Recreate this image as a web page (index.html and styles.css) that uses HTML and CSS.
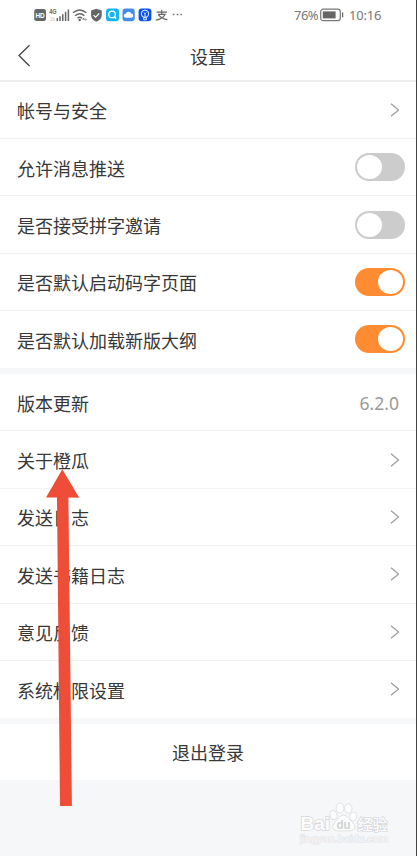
FILE: index.html
```html
<!DOCTYPE html>
<html lang="zh-CN">
<head>
<meta charset="utf-8">
<title>设置</title>
<link rel="stylesheet" href="styles.css">
</head>
<body>
<div class="screen">
  <div class="status">
    <svg class="status-icons" width="152" height="20" viewBox="0 0 152 20">
      <rect x="1.2" y="4" width="11.8" height="12" rx="2.5" fill="#666"/>
      <text x="2.4" y="12.8" font-size="7.5" font-weight="700" fill="#fff" textLength="9.4" lengthAdjust="spacingAndGlyphs">HD</text>
      <text x="16.2" y="9" font-size="7" font-weight="700" fill="#666" textLength="7.4" lengthAdjust="spacingAndGlyphs">4G</text>
      <text x="17" y="15.5" font-size="5" fill="#bbb" textLength="5" lengthAdjust="spacingAndGlyphs">1b</text>
      <path d="M24.3 16v-3M27 16v-4.8M29.8 16v-6.8M32.6 16V6.8M35.4 16V4.5" stroke="#666" stroke-width="1.5"/>
      <g fill="none" stroke="#666" stroke-width="1.5">
        <path d="M40 7.8q6.7-5.7 13.4 0M42.2 10.8q4.6-4 9.2 0M44.5 13.2q2.3-2 4.6 0"/>
      </g>
      <circle cx="46.7" cy="15" r="1.2" fill="#666"/>
      <path d="M49.5 14.2h4M49.8 14.2l1.4-1.5M53.4 14.2l-1.4 1.5" stroke="#666" stroke-width=".8" fill="none"/>
      <path d="M63.3 3.8l5.4 1.8v4.6q0 4.2-5.4 6.5q-5.2-2.3-5.2-6.5V5.6z" fill="#666"/>
      <path d="M60.5 10.1l2.1 2 3.7-3.8" fill="none" stroke="#fff" stroke-width="1.2"/>
      <rect x="73" y="3.5" width="13" height="12.8" rx="3" fill="#12b4f5"/>
      <circle cx="79.1" cy="9.4" r="3.3" fill="none" stroke="#fff" stroke-width="1.3"/>
      <path d="M81.3 11.8l1.9 1.9" stroke="#fff" stroke-width="1.3"/>
      <rect x="89.5" y="3.5" width="12.2" height="12.8" rx="3" fill="#438cec"/>
      <path d="M92.8 12.8a2 2 0 0 1 0-4a2.9 2.9 0 0 1 5.4-.4a2.3 2.3 0 0 1 .6 4.4z" fill="#fff"/>
      <rect x="105.6" y="3.5" width="12.8" height="12.8" rx="3" fill="#0a55e8"/>
      <circle cx="112" cy="8.8" r="3.6" fill="none" stroke="#d8e6ff" stroke-width="1.1"/>
      <path d="M112 8.5v5M110.6 12.5v2.3h2.8v-2.3M110.8 7.5l1.2 1.2 1.2-1.2" fill="none" stroke="#d8e6ff" stroke-width="1"/>
      <path d="M123.6 7.2h10.4M128.8 4.8v4.5M125 9.4h7q-2.2 4.4-9.2 5.7M125.6 9.8q3.2 4 8.8 4.8" fill="none" stroke="#666" stroke-width="1.2"/>
      <path d="M139.8 9.5h1.7M143.7 9.5h1.7M147.5 9.5h1.5" stroke="#777" stroke-width="1.5"/>
    </svg>
    <div class="status-right">
      <span class="percent">76%</span>
      <svg class="battery" width="24" height="14" viewBox="0 0 24 14">
        <rect x=".7" y="1.2" width="19.6" height="11.4" rx="2.6" fill="none" stroke="#777" stroke-width="1.2"/>
        <rect x="2.8" y="3.4" width="12.8" height="7" fill="#666"/>
        <path d="M22.6 4.5v4.8" stroke="#666" stroke-width="1.3"/>
      </svg>
      <span class="clock">10:16</span>
    </div>
  </div>
  <header class="header">
    <svg class="back" width="14" height="24" viewBox="0 0 14 24"><path d="M12.5 1.3L2 11.5 12.5 22" fill="none" stroke="#444" stroke-width="1.3"/></svg>
    <h1 class="title">设置</h1>
  </header>

  <section class="group">
    <div class="row"><span class="label">帐号与安全</span><svg class="chevron" viewBox="0 0 10 14"><path d="M1 .8l7.6 6.2L1 13.2"/></svg></div>
    <div class="row"><span class="label">允许消息推送</span><i class="switch"></i></div>
    <div class="row"><span class="label">是否接受拼字邀请</span><i class="switch"></i></div>
    <div class="row"><span class="label">是否默认启动码字页面</span><i class="switch on"></i></div>
    <div class="row"><span class="label">是否默认加载新版大纲</span><i class="switch on"></i></div>
  </section>

  <section class="group">
    <div class="row"><span class="label">版本更新</span><span class="version">6.2.0</span></div>
    <div class="row"><span class="label">关于橙瓜</span><svg class="chevron" viewBox="0 0 10 14"><path d="M1 .8l7.6 6.2L1 13.2"/></svg></div>
    <div class="row"><span class="label">发送日志</span><svg class="chevron" viewBox="0 0 10 14"><path d="M1 .8l7.6 6.2L1 13.2"/></svg></div>
    <div class="row"><span class="label">发送书籍日志</span><svg class="chevron" viewBox="0 0 10 14"><path d="M1 .8l7.6 6.2L1 13.2"/></svg></div>
    <div class="row"><span class="label">意见反馈</span><svg class="chevron" viewBox="0 0 10 14"><path d="M1 .8l7.6 6.2L1 13.2"/></svg></div>
    <div class="row"><span class="label">系统权限设置</span><svg class="chevron" viewBox="0 0 10 14"><path d="M1 .8l7.6 6.2L1 13.2"/></svg></div>
  </section>

  <div class="logout">退出登录</div>

  <svg class="arrow" width="36" height="340" viewBox="0 0 36 340"><path d="M17.3 1.2L34.2 29.8 23.4 29.6 26.9 338H15L12 29.6 1 29.6z" fill="#ee4d37"/></svg>

  <svg class="watermark" width="100" height="52" viewBox="0 0 100 52">
    <g fill="#fdfdfe" stroke="#dfe1e3" stroke-width="1">
      <ellipse cx="38.5" cy="20" rx="3.5" ry="4.6" transform="rotate(-15 38.5 20)"/>
      <ellipse cx="45" cy="13" rx="3.9" ry="5"/>
      <ellipse cx="53.3" cy="13.5" rx="3.7" ry="4.8"/>
      <ellipse cx="58.2" cy="21.5" rx="3.4" ry="4.4" transform="rotate(15 58.2 21.5)"/>
      <path d="M48.5 20q3.2 0 5.3 3.5l4 4.2q3.5 4 .8 6.7q-2 2-10 1.4q-7.8.7-10-1.4q-2.5-3 1-6.7l3.8-4.2q1.9-3.5 5.1-3.5z"/>
    </g>
    <g class="mark" paint-order="stroke" stroke="#d6d8da" stroke-width="1.5" fill="#fdfdfe">
      <text x="5.5" y="35" font-size="18" font-weight="700" textLength="29.5" lengthAdjust="spacingAndGlyphs">Bai</text>
      <text x="41.5" y="34" font-size="13" font-weight="700" textLength="14" lengthAdjust="spacingAndGlyphs" fill="#d0d2d4" stroke="none">du</text>
      <text x="62.5" y="34.5" font-size="15" font-weight="500" textLength="30" lengthAdjust="spacingAndGlyphs">经验</text>
      <text x="5" y="47" font-size="9.5" stroke-width="1" stroke="#dfe1e3" fill="#fafbfc" textLength="88" lengthAdjust="spacingAndGlyphs">jingyan.baidu.com</text>
    </g>
  </svg>
</div>
</body>
</html>
```
FILE: styles.css
```css
* { box-sizing: border-box; }

body {
  margin: 0;
  background: #fff;
  color: #383838;
  font-family: "Noto Sans CJK SC", sans-serif;
  font-size: 18px;
}

.screen {
  position: relative;
  width: 417px;
  height: 856px;
  overflow: hidden;
  background: #f5f7f9;
  border-right: 1px solid #444;
}

.status {
  display: flex;
  justify-content: space-between;
  height: 31px;
  padding: 5px 34px 0 33px;
  background: #fff;
}

.status-icons { font-family: "Liberation Sans", sans-serif; }

.status-right {
  display: flex;
  align-items: center;
  height: 20px;
  color: #777;
  font-family: "Noto Sans", sans-serif;
  font-size: 13px;
}

.percent { width: 26px; letter-spacing: -0.5px; white-space: nowrap; }
.battery { margin-top: -1px; }
.clock { width: 33px; margin-left: 5px; letter-spacing: -0.2px; white-space: nowrap; }

.header {
  display: flex;
  align-items: center;
  height: 51px;
  padding-left: 17px;
  background: #fff;
  border-bottom: 2px solid #eee;
}

.title {
  flex: 1;
  margin: 0 31px 0 0;
  text-align: center;
  font-size: 18px;
  font-weight: 400;
  line-height: 26px;
}

.group { margin-bottom: 6px; background: #fff; }

.row {
  display: flex;
  align-items: center;
  justify-content: space-between;
  height: 57.4px;
  padding: 0 11px 0 17px;
  border-bottom: 1px solid #f2f3f4;
  line-height: 26px;
}

.header + .group .row:first-child { height: 57px; }
.row:last-child { border-bottom-color: transparent; }
.header + .group .row:last-child { height: 56.8px; }

.label { margin-top: 1px; }
.header + .group .row:first-child .label { margin-top: 0; }

.chevron {
  width: 10px;
  height: 14px;
  margin: 0 5px 0 0;
  fill: none;
  stroke: #999;
  stroke-width: 1.1;
}

.version {
  margin: 1px 6px 0 0;
  color: #999;
  font-family: "Noto Sans", sans-serif;
  font-size: 17.5px;
}

.switch {
  display: flex;
  width: 50px;
  height: 28px;
  padding: 2px;
  border-radius: 14px;
  background: #ccc;
}

.switch::before {
  width: 25px;
  height: 24px;
  border-radius: 50%;
  background: #fff;
  content: "";
}

.switch.on { justify-content: flex-end; background: #ff8c32; }

.logout {
  height: 56px;
  background: #fff;
  line-height: 57px;
  text-align: center;
}

.arrow {
  position: absolute;
  top: 468px;
  left: 45px;
}

.watermark {
  position: absolute;
  top: 795px;
  left: 295px;
}

.mark { font-family: "Liberation Sans", "Noto Sans CJK SC", sans-serif; }
```
